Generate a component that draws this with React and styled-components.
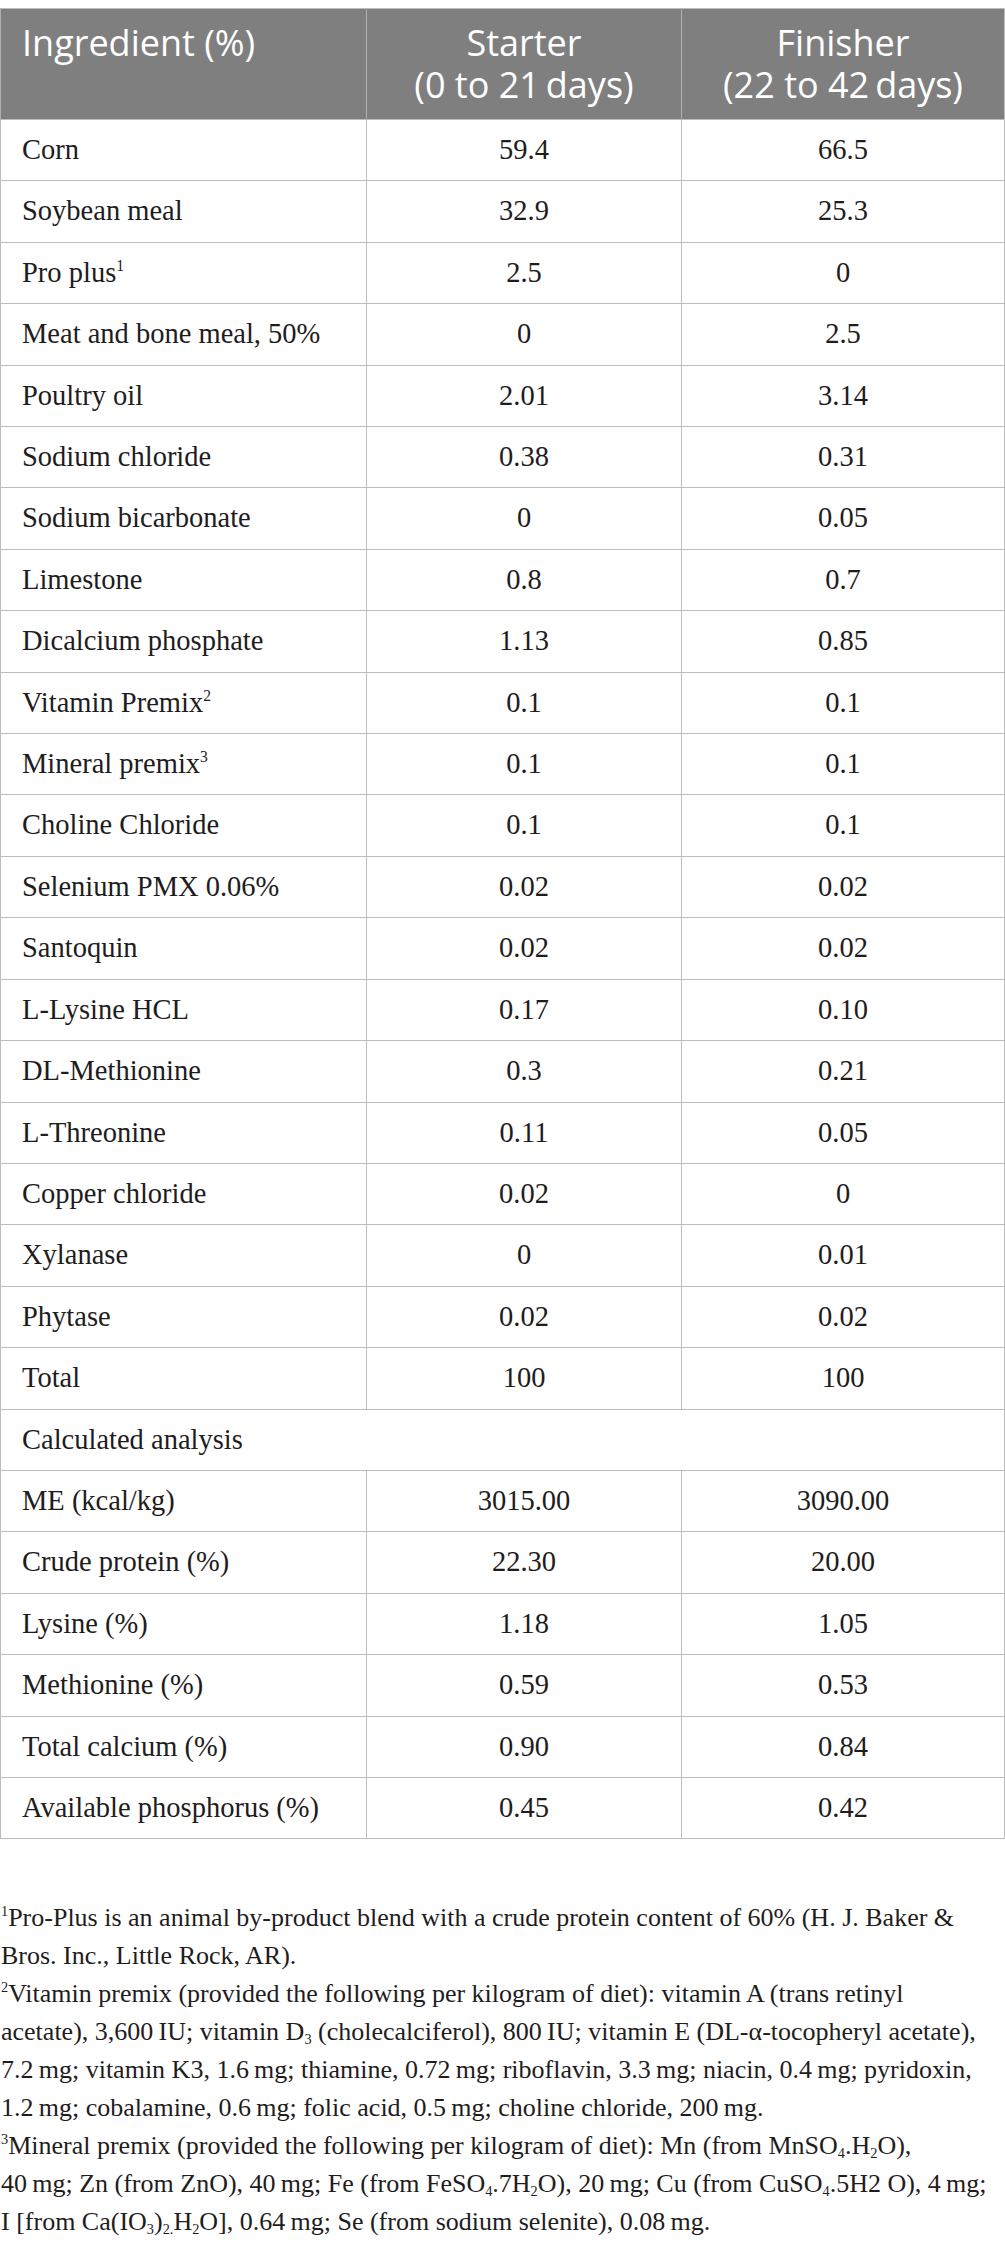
import React from 'react';
import styled, { createGlobalStyle } from 'styled-components';

const GlobalStyle = createGlobalStyle`
  html, body {
    margin: 0;
    padding: 0;
    background: #ffffff;
  }
  body {
    font-family: "Liberation Serif", "Times New Roman", serif;
    color: #1f1c1d;
  }
`;

const rows = [
  ['Corn', '59.4', '66.5'],
  ['Soybean meal', '32.9', '25.3'],
  ['Pro plus', '2.5', '0', '1'],
  ['Meat and bone meal, 50%', '0', '2.5'],
  ['Poultry oil', '2.01', '3.14'],
  ['Sodium chloride', '0.38', '0.31'],
  ['Sodium bicarbonate', '0', '0.05'],
  ['Limestone', '0.8', '0.7'],
  ['Dicalcium phosphate', '1.13', '0.85'],
  ['Vitamin Premix', '0.1', '0.1', '2'],
  ['Mineral premix', '0.1', '0.1', '3'],
  ['Choline Chloride', '0.1', '0.1'],
  ['Selenium PMX 0.06%', '0.02', '0.02'],
  ['Santoquin', '0.02', '0.02'],
  ['L-Lysine HCL', '0.17', '0.10'],
  ['DL-Methionine', '0.3', '0.21'],
  ['L-Threonine', '0.11', '0.05'],
  ['Copper chloride', '0.02', '0'],
  ['Xylanase', '0', '0.01'],
  ['Phytase', '0.02', '0.02'],
  ['Total', '100', '100'],
];

const analysis = [
  ['ME (kcal/kg)', '3015.00', '3090.00'],
  ['Crude protein (%)', '22.30', '20.00'],
  ['Lysine (%)', '1.18', '1.05'],
  ['Methionine (%)', '0.59', '0.53'],
  ['Total calcium (%)', '0.90', '0.84'],
  ['Available phosphorus (%)', '0.45', '0.42'],
];

const Page = styled.div`
  width: 1005px;
  padding-top: 8px;
`;

const Table = styled.table`
  width: 1004px;
  border-collapse: collapse;
  table-layout: fixed;
  border: 1px solid #bcbcbc;
`;

const HeadCell = styled.th`
  background: #7f7f7f;
  color: #ffffff;
  font-family: "Open Sans", "Noto Sans", sans-serif;
  font-weight: 400;
  font-size: 36px;
  line-height: 42px;
  padding: 13px 21px;
  text-align: ${p => (p.$left ? 'left' : 'center')};
  vertical-align: top;
  border-left: 1px solid #b0b0b0;
`;

const Cell = styled.td`
  font-size: 28.5px;
  line-height: 34.4px;
  padding: 13px 21px;
  text-align: ${p => (p.$center ? 'center' : 'left')};
  border: 1px solid #bcbcbc;
  white-space: nowrap;
`;

const Sup = styled.sup`
  font-size: 0.55em;
  line-height: 0;
  vertical-align: 0.7em;
`;

const Sub = styled.sub`
  font-size: 0.55em;
  line-height: 0;
  vertical-align: -0.25em;
`;

const Notes = styled.div`
  margin-top: 60px;
  padding-left: 1px;
  font-size: 26px;
  line-height: 38px;
`;

const Line = styled.div`
  white-space: nowrap;
`;

const t = '\u2009';

export default function App() {
  return (
    <Page>
      <GlobalStyle />
      <Table>
        <colgroup>
          <col style={{ width: 366 }} />
          <col style={{ width: 315 }} />
          <col style={{ width: 323 }} />
        </colgroup>
        <thead>
          <tr>
            <HeadCell $left>Ingredient (%)</HeadCell>
            <HeadCell>
              Starter
              <br />
              (0 to 21{t}days)
            </HeadCell>
            <HeadCell>
              Finisher
              <br />
              (22 to 42{t}days)
            </HeadCell>
          </tr>
        </thead>
        <tbody>
          {rows.map(([name, a, b, note]) => (
            <tr key={name}>
              <Cell>
                {name}
                {note && <Sup>{note}</Sup>}
              </Cell>
              <Cell $center>{a}</Cell>
              <Cell $center>{b}</Cell>
            </tr>
          ))}
          <tr>
            <Cell colSpan={3}>Calculated analysis</Cell>
          </tr>
          {analysis.map(([name, a, b]) => (
            <tr key={name}>
              <Cell>{name}</Cell>
              <Cell $center>{a}</Cell>
              <Cell $center>{b}</Cell>
            </tr>
          ))}
        </tbody>
      </Table>
      <Notes>
        <Line>
          <Sup>1</Sup>Pro-Plus is an animal by-product blend with a crude protein content of 60% (H. J. Baker &amp;
        </Line>
        <Line>Bros. Inc., Little Rock, AR).</Line>
        <Line>
          <Sup>2</Sup>Vitamin premix (provided the following per kilogram of diet): vitamin A (trans retinyl
        </Line>
        <Line>
          acetate), 3,600{t}IU; vitamin D<Sub>3</Sub> (cholecalciferol), 800{t}IU; vitamin E (DL-α-tocopheryl acetate),
        </Line>
        <Line>
          7.2{t}mg; vitamin K3, 1.6{t}mg; thiamine, 0.72{t}mg; riboflavin, 3.3{t}mg; niacin, 0.4{t}mg; pyridoxin,
        </Line>
        <Line>
          1.2{t}mg; cobalamine, 0.6{t}mg; folic acid, 0.5{t}mg; choline chloride, 200{t}mg.
        </Line>
        <Line>
          <Sup>3</Sup>Mineral premix (provided the following per kilogram of diet): Mn (from MnSO<Sub>4</Sub>.H<Sub>2</Sub>O),
        </Line>
        <Line>
          40{t}mg; Zn (from ZnO), 40{t}mg; Fe (from FeSO<Sub>4</Sub>.7H<Sub>2</Sub>O), 20{t}mg; Cu (from CuSO<Sub>4</Sub>.5H2 O), 4{t}mg;
        </Line>
        <Line>
          I [from Ca(IO<Sub>3</Sub>)<Sub>2.</Sub>H<Sub>2</Sub>O], 0.64{t}mg; Se (from sodium selenite), 0.08{t}mg.
        </Line>
      </Notes>
    </Page>
  );
}
